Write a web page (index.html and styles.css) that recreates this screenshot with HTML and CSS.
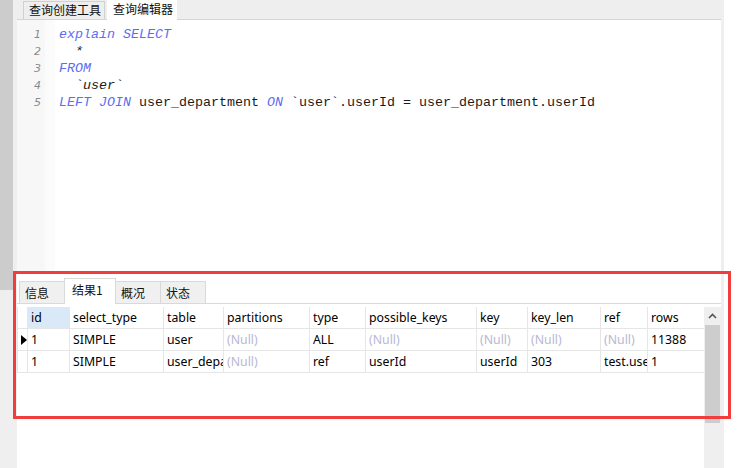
FILE: index.html
```html
<!DOCTYPE html>
<html>
<head>
<meta charset="utf-8">
<link rel="stylesheet" href="styles.css">
</head>
<body>
<div class="app">
  <div class="side"><div class="side-dark"></div></div>
  <div class="main">
    <div class="topbar">
      <div class="ttab">查询创建工具</div>
      <div class="ttab active">查询编辑器</div>
    </div>
    <div class="editor">
      <div class="gutter">
        <div>1</div><div>2</div><div>3</div><div>4</div><div>5</div>
      </div>
      <div class="code">
        <div class="ln"><span class="kw">explain SELECT</span></div>
        <div class="ln">  <span class="it">*</span></div>
        <div class="ln"><span class="kw">FROM</span></div>
        <div class="ln">  <span class="it">`user`</span></div>
        <div class="ln"><span class="kw">LEFT JOIN</span> user_department <span class="kw">ON</span> `user`.userId = user_department.userId</div>
      </div>
    </div>
    <div class="results">
      <div class="rtabs">
        <div class="rtab">信息</div>
        <div class="rtab active">结果1</div>
        <div class="rtab">概况</div>
        <div class="rtab">状态</div>
      </div>
      <div class="gridwrap">
        <div class="grid">
          <div class="row head">
            <div class="c ind"></div>
            <div class="c w-id sel">id</div>
            <div class="c w-st">select_type</div>
            <div class="c w-tb">table</div>
            <div class="c w-pa">partitions</div>
            <div class="c w-ty">type</div>
            <div class="c w-pk">possible_keys</div>
            <div class="c w-k">key</div>
            <div class="c w-kl">key_len</div>
            <div class="c w-rf">ref</div>
            <div class="c w-rw">rows</div>
          </div>
          <div class="row">
            <div class="c ind"><svg width="6" height="10" viewBox="0 0 6 10"><path d="M0 0 L6 5 L0 10 Z" fill="#000"/></svg></div>
            <div class="c w-id">1</div>
            <div class="c w-st">SIMPLE</div>
            <div class="c w-tb">user</div>
            <div class="c w-pa null">(Null)</div>
            <div class="c w-ty">ALL</div>
            <div class="c w-pk null">(Null)</div>
            <div class="c w-k null">(Null)</div>
            <div class="c w-kl null">(Null)</div>
            <div class="c w-rf null">(Null)</div>
            <div class="c w-rw">11388</div>
          </div>
          <div class="row">
            <div class="c ind"></div>
            <div class="c w-id">1</div>
            <div class="c w-st">SIMPLE</div>
            <div class="c w-tb">user_depa</div>
            <div class="c w-pa null">(Null)</div>
            <div class="c w-ty">ref</div>
            <div class="c w-pk">userId</div>
            <div class="c w-k">userId</div>
            <div class="c w-kl">303</div>
            <div class="c w-rf">test.use</div>
            <div class="c w-rw">1</div>
          </div>
        </div>
        <div class="vscroll">
          <div class="up"><svg width="9" height="6" viewBox="0 0 9 6"><path d="M1 5 L4.5 1.5 L8 5" fill="none" stroke="#555" stroke-width="1.6"/></svg></div>
          <div class="thumb"></div>
        </div>
      </div>
    </div>
  </div>
  <div class="rstrip"></div>
  <div class="rest"></div>
</div>
<div class="annot"></div>
</body>
</html>
```

FILE: styles.css
```css
html, body {
  margin: 0;
  padding: 0;
  background: #ffffff;
  width: 750px;
  height: 468px;
  overflow: hidden;
  font-family: "Microsoft YaHei", "Noto Sans", "Noto Sans CJK SC", sans-serif;
}
.app {
  display: flex;
  height: 468px;
}
.side {
  width: 17px;
  background: #efefef;
  flex: none;
}
.side-dark {
  width: 13px;
  height: 290px;
  background: #cccccc;
}
.main {
  width: 704px;
  flex: none;
  display: flex;
  flex-direction: column;
}
.topbar {
  height: 19px;
  background: #eeeeee;
  border-bottom: 1px solid #d5d5d5;
  display: flex;
  padding-left: 6px;
  align-items: flex-end;
  margin-right: -3px;
}
.ttab {
  height: 18px;
  box-sizing: border-box;
  padding: 0 3px 0 5px;
  font-size: 12px;
  line-height: 16px;
  color: #111;
  border: 1px solid #d0d0d0;
  border-bottom: none;
  background: #eeeeee;
  font-family: "Noto Sans CJK SC", sans-serif;
}
.ttab.active {
  background: #ffffff;
  height: 20px;
  margin-bottom: -1px;
  margin-left: 2px;
  border-color: #ffffff;
  line-height: 16px;
}
.editor {
  height: 254px;
  display: flex;
  background: #ffffff;
}
.gutter {
  width: 38px;
  box-sizing: border-box;
  background: linear-gradient(to right, #f7f7f7 0, #f7f7f7 28px, #fbfbfb 28px);
  padding: 6px 14px 0 0;
  text-align: right;
  font-family: "DejaVu Sans", sans-serif;
  font-style: italic;
  font-size: 11px;
  color: #8a8a8a;
  line-height: 17px;
}
.code {
  padding: 6px 0 0 4px;
  font-family: "Liberation Mono", monospace;
  font-size: 13.33px;
  line-height: 17px;
  color: #1a1a1a;
}
.ln {
  white-space: pre;
  height: 17px;
}
.kw {
  color: #5c6cf4;
  font-style: italic;
}
.it {
  font-style: italic;
}
.results {
  flex: 1;
  background: #ffffff;
  display: flex;
  flex-direction: column;
  padding-top: 4px;
}
.rtabs {
  display: flex;
  height: 25px;
  align-items: flex-end;
  border-bottom: 1px solid #d9d9d9;
  padding-left: 2px;
}
.rtab {
  height: 22px;
  box-sizing: border-box;
  border: 1px solid #d9d9d9;
  border-bottom: none;
  background: #f0f0f0;
  font-size: 12px;
  line-height: 22px;
  padding-left: 5px;
  width: 46px;
  margin-right: -1px;
  color: #111;
  font-family: "Noto Sans CJK SC", sans-serif;
}
.rtab.active {
  background: #ffffff;
  height: 26px;
  margin-bottom: -1px;
  width: 52px;
  padding-left: 7px;
  line-height: 22px;
}
.gridwrap {
  display: flex;
  margin-top: 3px;
  flex: 1;
}
.grid {
  width: 687px;
  flex: none;
  font-size: 12.3px;
  font-family: "Noto Sans", "Microsoft YaHei", sans-serif;
  color: #000;
}
.row {
  display: flex;
  height: 22px;
  border-bottom: 1px solid #e6e6e6;
  box-sizing: border-box;
}
.c {
  height: 21px;
  box-sizing: border-box;
  border-right: 1px solid #e6e6e6;
  padding-left: 3px;
  line-height: 22px;
  white-space: nowrap;
  overflow: hidden;
  flex: none;
}
.c.ind {
  width: 11px;
  padding-left: 3px;
  border-left: 1px solid #e6e6e6;
  display: flex;
  align-items: center;
}
.sel { background: #d9e9f7; }
.null { color: #b8b8d2; }
.w-id { width: 42px; }
.w-st { width: 94px; }
.w-tb { width: 60px; }
.w-pa { width: 86px; }
.w-ty { width: 56px; }
.w-pk { width: 111px; }
.w-k { width: 51px; }
.w-kl { width: 73px; }
.w-rf { width: 47px; }
.w-rw { width: 56px; border-right: none; }
.vscroll {
  width: 17px;
  flex: none;
  background: #efefef;
  display: flex;
  flex-direction: column;
}
.up {
  height: 18px;
  display: flex;
  align-items: center;
  justify-content: center;
}
.thumb {
  margin-left: 1px;
  width: 15px;
  height: 98px;
  background: #cdcdcd;
}
.rstrip {
  width: 3px;
  background: #efefef;
  flex: none;
}
.rest {
  flex: 1;
  background: #ffffff;
}
.annot {
  position: absolute;
  left: 13px;
  top: 271px;
  width: 712px;
  height: 142px;
  border: 3px solid #f23d3d;
}
```
